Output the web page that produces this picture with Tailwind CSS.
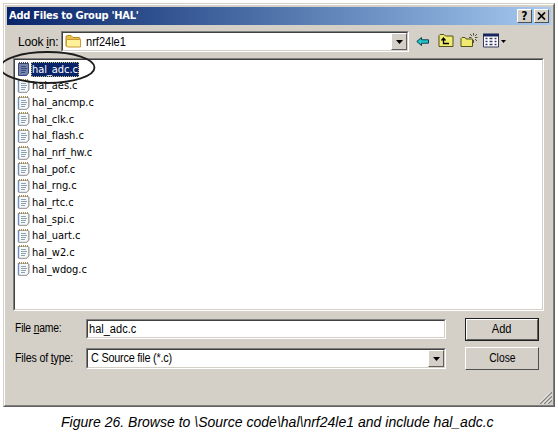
<!DOCTYPE html>
<html lang="en">
<head>
<meta charset="utf-8">
<title>Add Files to Group 'HAL'</title>
<script src="https://cdn.jsdelivr.net/npm/@tailwindcss/browser@4"></script>
</head>
<body class="w-[558px] h-[438px] overflow-hidden bg-white text-black font-['Liberation_Sans',Arial,sans-serif] text-[11px]">
<svg class="hidden">
  <symbol id="file" viewBox="0 0 13 15">
    <path d="M1.500 2.500H11.500V12L9.500 14.500H1.500Z" fill="#f6f9fb" stroke="#a9b6c4"/>
    <path d="M1.500 2V14" stroke="#6f90bd" stroke-width="1.400"/>
    <path d="M2 14.300H10L12 12V3" fill="none" stroke="#a09c98"/>
    <path d="M2 2H12" stroke="#a88b4c" stroke-width="2" stroke-dasharray="1 1"/>
    <path d="M4 5.500H9M4 7.500H10M4 9.500H9M4 11.500H8" stroke="#8fa0aa"/>
  </symbol>
  <symbol id="file-selected" viewBox="0 0 13 15">
    <path d="M1.500 2.500H11.500V12L9.500 14.500H1.500Z" fill="#7684ad" stroke="#35487f"/>
    <path d="M2 2H12" stroke="#3c4055" stroke-width="2" stroke-dasharray="1 1"/>
    <path d="M4 5.500H9M4 7.500H10M4 9.500H9M4 11.500H8" stroke="#3b4b7c"/>
  </symbol>
</svg>
<div class="relative ml-[3px] mt-[3px] w-[552px] h-[404px] bg-[#d4d0c8] border border-l-[#d4d0c8] border-t-[#d4d0c8] border-r-[#606060] border-b-[#606060]">
  <div class="h-full border border-l-white border-t-white border-r-[#808080] border-b-[#808080] p-[2px]">
    <header class="h-[18px] flex items-center pl-[2px] pr-[2px] bg-linear-to-r from-[#0a246a] to-[#a6caf0]">
      <h1 class="grow whitespace-nowrap text-white font-bold text-[11px] leading-[16px] font-['DejaVu_Sans_Condensed','DejaVu_Sans',sans-serif]"><span class="tracking-[-0.25px]">Add Files to Group 'HAL'</span></h1>
      <button class="w-[15px] h-[14px] bg-[#d4d0c8] border border-l-white border-t-white border-r-[#505050] border-b-[#505050] flex items-center justify-center font-bold text-[12px] leading-none font-['DejaVu_Sans_Condensed',sans-serif]">?</button>
      <button class="ml-[2px] w-[15px] h-[14px] bg-[#d4d0c8] border border-l-white border-t-white border-r-[#505050] border-b-[#505050] flex items-center justify-center"><svg class="w-[9px] h-[8px]" viewBox="0 0 9 8"><path d="M1 .5L8 7.500M8 .5L1 7.500" stroke="#000" stroke-width="1.700"/></svg></button>
    </header>

    <div class="h-[33px] pt-[6px] flex items-start">
      <label class="w-[54px] pl-[11px] pt-[4px] leading-[14px] text-[12px] tracking-[-0.2px] whitespace-nowrap">Look <u>i</u>n:</label>
      <div class="w-[348px] h-[21px] bg-white border border-l-[#808080] border-t-[#808080] border-r-white border-b-white">
        <div class="h-full flex items-center border border-l-[#404040] border-t-[#404040] border-r-[#d4d0c8] border-b-[#d4d0c8] pl-[2px]">
          <svg class="w-[17px] h-[15px]" viewBox="0 0 17 15"><path d="M1 12V3Q1 1.500 2.500 1.500H6L8 3.500H14Q15 3.500 15 5V12Z" fill="#edbd49" stroke="#b88a25"/><path d="M1.500 12V5.500H15.500V13H2.500Z" fill="#fff09a" stroke="#c89c34"/></svg>
          <span class="ml-[4px] grow text-[12px] leading-[14px]"><span class="inline-block origin-left scale-x-[.92]">nrf24le1</span></span>
          <span class="w-[16px] h-[17px] bg-[#d4d0c8] border border-l-white border-t-white border-r-[#606060] border-b-[#606060] flex items-center justify-center"><svg class="w-[7px] h-[4px]" viewBox="0 0 7 4"><path d="M0 0H7L3.500 4Z"/></svg></span>
        </div>
      </div>
      <svg class="ml-[7px] mt-[5px] w-[14px] h-[11px]" viewBox="0 0 14 11"><path d="M.8 5.500L5.500 1.500V3.800H12.500V7.200H5.500V9.500Z" fill="#20c8cc" stroke="#103c50"/></svg>
      <svg class="ml-[8px] mt-[2px] w-[16px] h-[15px]" viewBox="0 0 16 15"><path d="M1 13.500V2.500L2 1.500H6L7.500 3H15V13.500Z" fill="#f0eb70" stroke="#55521c"/><path d="M5.500 5.500V10.500H11M3.500 7.500L5.500 5L7.500 7.500" fill="none" stroke="#000" stroke-width="1.300"/></svg>
      <svg class="ml-[6px] mt-[1px] w-[18px] h-[16px]" viewBox="0 0 18 16"><path d="M1 14.500V6.500L2 5.500H5L6 7H12.500V14.500Z" fill="#f0eb70" stroke="#55521c"/><path d="M13.500 1V3.500M13.500 8V11M9 5.500H11.500M15 5.500H17.500M10 2L12 4M17 2L15 4M15 7L17 9" stroke="#555238" stroke-width="1"/></svg>
      <svg class="ml-[5px] mt-[2px] w-[16px] h-[15px]" viewBox="0 0 16 15"><path d="M.5 1.500H15.500V14H.5Z" fill="#fff" stroke="#35385c"/><path d="M0 2H16" stroke="#17265f" stroke-width="3"/><path d="M2.500 5.500H4.500M6.500 5.500H9.500M11.500 5.500H13.500M2.500 8.500H4.500M6.500 8.500H9.500M11.500 8.500H13.500M2.500 11.500H4.500M6.500 11.500H9.500M11.500 11.500H13.500" stroke="#343a68" stroke-width="1.500"/></svg>
      <svg class="ml-[2px] mt-[9px] w-[5px] h-[3px]" viewBox="0 0 5 3"><path d="M0 0H5L2.500 3Z"/></svg>
    </div>

    <div class="ml-[6px] w-[531px] h-[253px] bg-white border border-l-[#808080] border-t-[#808080] border-r-white border-b-white">
      <ul id="files" class="h-full border border-l-[#404040] border-t-[#404040] border-r-[#d4d0c8] border-b-[#d4d0c8] pl-[2px] pt-[1px] text-[11px] font-['DejaVu_Sans_Condensed','DejaVu_Sans',sans-serif]"></ul>
    </div>

    <div class="flex pl-[8px] pt-[7px]">
      <div class="w-[71px] flex flex-col text-[12px] leading-[14px] tracking-[-0.2px] whitespace-nowrap">
        <label class="mt-[3px]"><span class="inline-block origin-left scale-x-[.86]">File <u>n</u>ame:</span></label>
        <label class="mt-[16px]"><span class="inline-block origin-left scale-x-[.89]">Files of <u>t</u>ype:</span></label>
      </div>
      <div class="w-[360px] pt-[1px] flex flex-col gap-[9px]">
        <div class="h-[20px] bg-white border border-l-[#808080] border-t-[#808080] border-r-white border-b-white"><div class="h-full border border-l-[#404040] border-t-[#404040] border-r-[#d4d0c8] border-b-[#d4d0c8] pl-[1px] text-[12px] leading-[17px]"><span class="inline-block origin-left scale-x-[.92]">hal_adc.c</span></div></div>
        <div class="h-[21px] bg-white border border-l-[#808080] border-t-[#808080] border-r-white border-b-white"><div class="h-full flex items-center border border-l-[#404040] border-t-[#404040] border-r-[#d4d0c8] border-b-[#d4d0c8] pl-[3px] text-[12px]"><span class="grow leading-[17px] tracking-[-0.25px]"><span class="inline-block origin-left scale-x-[.905]">C Source file (*.c)</span></span><span class="w-[16px] h-[17px] bg-[#d4d0c8] border border-l-white border-t-white border-r-[#606060] border-b-[#606060] flex items-center justify-center"><svg class="w-[7px] h-[4px]" viewBox="0 0 7 4"><path d="M0 0H7L3.500 4Z"/></svg></span></div></div>
      </div>
      <div class="ml-[19px] w-[74px] flex flex-col gap-[6px] text-[12px] leading-[14px]">
        <button class="h-[23px] border border-[#202020]"><span class="h-full flex items-center justify-center border border-l-white border-t-white border-r-[#606060] border-b-[#606060]"><span class="-mt-px scale-x-[.92]">Add</span></span></button>
        <button class="h-[23px] border border-l-white border-t-white border-r-[#505050] border-b-[#505050] flex items-center justify-center"><span class="-mt-px scale-x-[.86]">Close</span></button>
      </div>
    </div>
  </div>
  <svg class="absolute right-[2px] bottom-[2px] w-[12px] h-[12px]" viewBox="0 0 12 12"><path d="M0 12L12 0M4 12L12 4M8 12L12 8" stroke="#808080" stroke-width="1.300"/><path d="M-1.500 12L12 -1.500M2.500 12L12 2.500M6.500 12L12 6.500" stroke="#fff" stroke-width=".8"/></svg>
  <svg class="absolute left-[-1px] top-[46px] w-[94px] h-[36px]" viewBox="0 0 94 36"><ellipse cx="44.500" cy="17.500" rx="47" ry="15.500" fill="none" stroke="#1c1c1c" stroke-width="1.800"/></svg>
</div>
<p class="ml-[61px] mt-[7px] text-[14px] leading-[17px] italic whitespace-nowrap"><span class="tracking-[0.01px]">Figure 26. Browse to \Source code\hal\nrf24le1 and include hal_adc.c</span></p>
<script>
const names = ['adc', 'aes', 'ancmp', 'clk', 'flash', 'nrf_hw', 'pof', 'rng', 'rtc', 'spi', 'uart', 'w2', 'wdog'];
document.getElementById('files').innerHTML = names.map((n, i) => `
  <li class="h-[16.650px] flex items-center whitespace-nowrap">
    <svg class="w-[13px] h-[15px] -mt-px"><use href="${i ? '#file' : '#file-selected'}"/></svg>
    <span class="ml-[1px] px-[1px] h-[15px] leading-[15px] tracking-[-0.05px] ${i ? '' : 'bg-[#0a246a] text-white outline-1 -outline-offset-1 outline-dotted outline-[#c8bd80]'}">hal_${n}.c</span>
  </li>`).join('');
</script>
</body>
</html>
